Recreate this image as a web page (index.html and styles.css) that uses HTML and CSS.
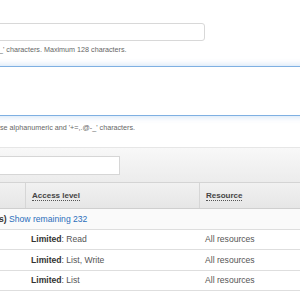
FILE: index.html
```html
<!DOCTYPE html>
<html>
<head>
<meta charset="utf-8">
<link rel="stylesheet" href="styles.css">
</head>
<body>
<div class="page">
  <div class="name-input"></div>
  <div class="hint hint-one">_' characters. Maximum 128 characters.</div>
  <div class="textarea"></div>
  <div class="hint hint-two">se alphanumeric and '+=,.@-_' characters.</div>
  <div class="filter-bar">
    <div class="filter-input"></div>
  </div>
  <div class="table">
    <div class="row head">
      <div class="cell"></div>
      <div class="cell"><span class="th">Access level</span></div>
      <div class="cell"><span class="th">Resource</span></div>
    </div>
    <div class="row group">
      <div class="group-cell"><b>s)</b> <a class="link">Show remaining 232</a></div>
    </div>
    <div class="row">
      <div class="cell"></div>
      <div class="cell"><b>Limited</b>: Read</div>
      <div class="cell">All resources</div>
    </div>
    <div class="row">
      <div class="cell"></div>
      <div class="cell"><b>Limited</b>: List, Write</div>
      <div class="cell">All resources</div>
    </div>
    <div class="row">
      <div class="cell"></div>
      <div class="cell"><b>Limited</b>: List</div>
      <div class="cell">All resources</div>
    </div>
  </div>
</div>
</body>
</html>
```
FILE: styles.css
```css
html, body {
  margin: 0;
  padding: 0;
  background: #fff;
  overflow: hidden;
}
body {
  width: 300px;
  height: 300px;
  font-family: "Liberation Sans", Arial, sans-serif;
  color: #444;
}
.page {
  display: flex;
  flex-direction: column;
}
.name-input {
  margin: 23px 0 0 -10px;
  width: 213px;
  height: 16px;
  border: 1px solid #d8d8d8;
  border-radius: 3px;
  background: #fff;
}
.hint {
  font-size: 7.2px;
  line-height: 10px;
  color: #666;
  white-space: nowrap;
}
.hint-one {
  margin: 4px 0 0 -1px;
}
.textarea {
  margin: 11px -10px 0 -10px;
  height: 48px;
  border: 1px solid #7fb0e2;
  box-shadow: 0 0 7px rgba(90, 150, 220, 0.35);
  background: #fff;
}
.hint-two {
  margin-top: 7px;
}
.filter-bar {
  margin-top: 14px;
  height: 34px;
  border-top: 1px solid #e6e6e6;
  background: linear-gradient(#f8f8f8, #ececec);
  display: flex;
  align-items: center;
}
.filter-input {
  margin-left: -10px;
  width: 128px;
  height: 17px;
  border: 1px solid #d6d6d6;
  background: #fff;
  margin-top: 0px;
}
.table {
  display: flex;
  flex-direction: column;
  font-size: 8.6px;
}
.row {
  display: grid;
  grid-template-columns: 25px 174px 1fr;
  height: 19.5px;
  border-bottom: 1px solid #dedede;
  align-items: center;
  background: #fff;
}
.row.head {
  height: 25px;
  border-top: 1px solid #d4d4d4;
  border-bottom: 1px solid #cfcfcf;
  background: linear-gradient(#f1f1f1, #e6e6e6);
}
.head .cell {
  height: 100%;
  display: flex;
  align-items: center;
  border-left: 1px solid #d6d6d6;
  box-sizing: border-box;
}
.head .cell:first-child {
  border-left: none;
}
.th {
  font-weight: bold;
  font-size: 8px;
  color: #444;
  border-bottom: 1px dotted #555;
  line-height: 9px;
}
.cell {
  padding-left: 6px;
  white-space: nowrap;
  color: #555;
}
.head .cell { padding-left: 6px; }
.cell b {
  color: #333;
}
.row.group {
  display: flex;
  background: #fafafa;
}
.group-cell {
  white-space: nowrap;
  margin-left: -1px;
}
.group-cell b {
  color: #333;
}
.link {
  color: #2a6ebb;
}
```
